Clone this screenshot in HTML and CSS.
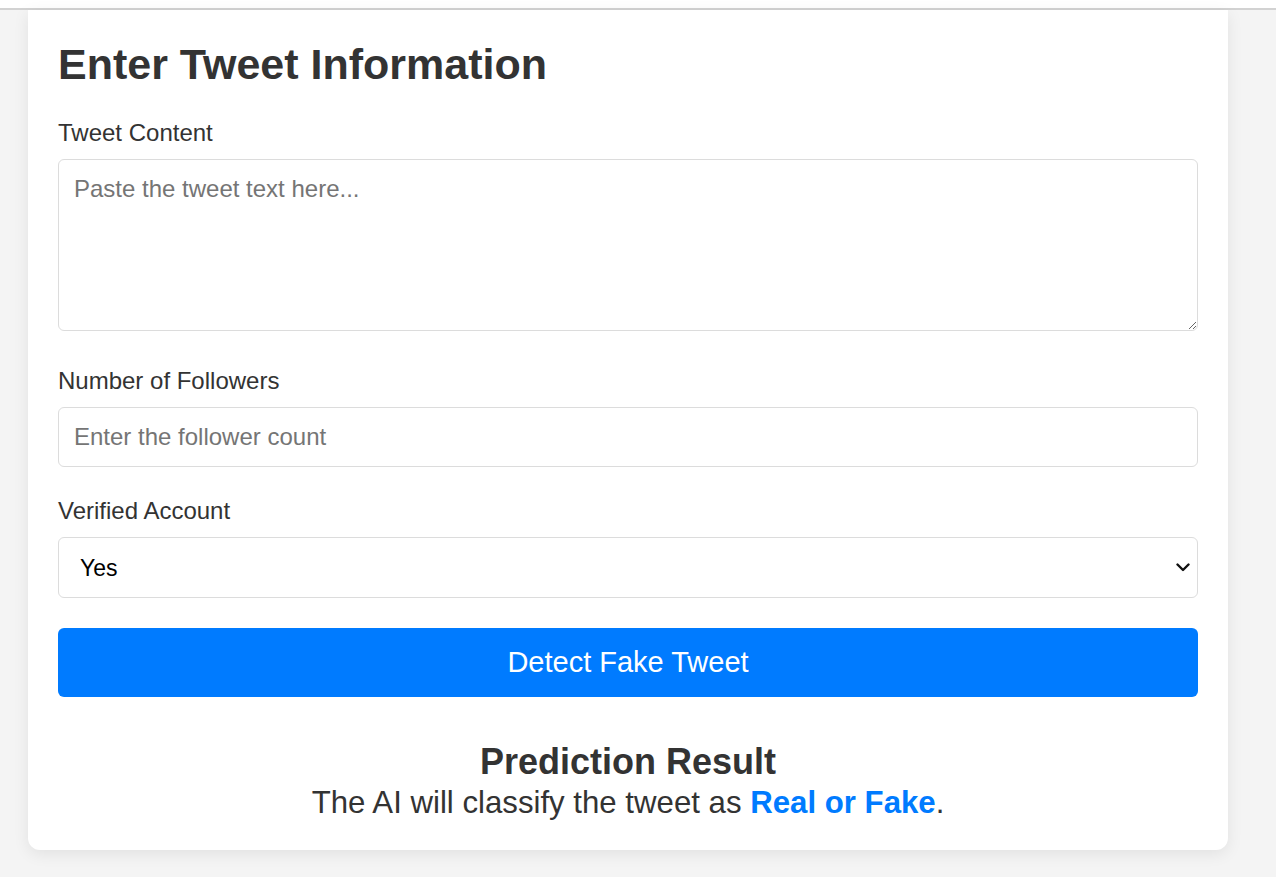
FILE: index.html
```html
<!DOCTYPE html>
<html lang="en">
<head>
<meta charset="utf-8">
<title>Fake Tweet Detector</title>
<link rel="stylesheet" href="styles.css">
</head>
<body>
<div class="topbar"></div>
<main class="card">
  <h1 class="title">Enter Tweet Information</h1>
  <form class="form">
    <div class="field field-area">
      <label class="label" for="tweet">Tweet Content</label>
      <textarea class="control textarea" id="tweet" placeholder="Paste the tweet text here..."></textarea>
    </div>
    <div class="field">
      <label class="label" for="followers">Number of Followers</label>
      <input class="control" id="followers" type="number" placeholder="Enter the follower count">
    </div>
    <div class="field field-last">
      <label class="label" for="verified">Verified Account</label>
      <div class="select-wrap">
        <select class="control select" id="verified">
          <option>Yes</option>
          <option>No</option>
        </select>
        <svg class="chevron" width="14" height="9" viewBox="0 0 14 9"><path d="M1.5 1.5 L7 7 L12.5 1.5" fill="none" stroke="#111" stroke-width="2.4" stroke-linecap="round" stroke-linejoin="round"/></svg>
      </div>
    </div>
    <button class="button" type="button">Detect Fake Tweet</button>
  </form>
  <section class="result">
    <h2 class="result-title">Prediction Result</h2>
    <p class="result-text">The AI will classify the tweet as <strong class="highlight">Real or Fake</strong>.</p>
  </section>
</main>
</body>
</html>
```

FILE: styles.css
```css
* { box-sizing: border-box; }

html, body {
  margin: 0;
  padding: 0;
  background: #f4f4f4;
  font-family: "Liberation Sans", Arial, sans-serif;
  color: #333;
}

.topbar {
  height: 10px;
  background: #fff;
  border-bottom: 2px solid #d2d2d2;
}

.card {
  width: 1200px;
  margin: 0 0 27px 28px;
  background: #fff;
  border-radius: 0 0 12px 12px;
  box-shadow: 0 4px 16px rgba(0, 0, 0, 0.08);
  padding: 30px 30px 30px;
}

.title {
  margin: 0 0 31px;
  font-size: 43px;
  line-height: 49px;
  font-weight: bold;
  color: #333;
}

.field {
  margin-bottom: 31px;
}

.field-area {
  margin-bottom: 37px;
}

.field-last {
  margin-bottom: 30px;
}

.label {
  display: block;
  font-size: 24px;
  line-height: 26px;
  margin-bottom: 13px;
  color: #333;
}

.control {
  display: block;
  width: 100%;
  font-family: "Liberation Sans", Arial, sans-serif;
  font-size: 24px;
  padding: 15px;
  border: 1px solid #dcdcdc;
  border-radius: 6px;
  color: #333;
  background: #fff;
  outline: none;
}

.control::placeholder {
  color: #757575;
}

.textarea {
  height: 172px;
  padding-top: 15px;
  resize: vertical;
}

.select-wrap {
  position: relative;
}

.select {
  appearance: none;
  -webkit-appearance: none;
  color: #000;
  font-size: 23px;
  height: 61px;
  padding: 0 0 0 21px;
}

.chevron {
  position: absolute;
  right: 8px;
  top: 26px;
  pointer-events: none;
}

.button {
  display: block;
  width: 100%;
  border: none;
  border-radius: 6px;
  background: #007bff;
  color: #fff;
  font-family: "Liberation Sans", Arial, sans-serif;
  font-size: 29px;
  line-height: 33px;
  padding: 18px 0 18px;
  cursor: pointer;
}

.result {
  margin-top: 44px;
  text-align: center;
}

.result-title {
  margin: 0;
  font-size: 36px;
  line-height: 41px;
  font-weight: bold;
  color: #333;
}

.result-text {
  margin: 3px 0 0;
  font-size: 31.2px;
  line-height: 35px;
  color: #333;
}

.highlight {
  color: #007bff;
}
```
